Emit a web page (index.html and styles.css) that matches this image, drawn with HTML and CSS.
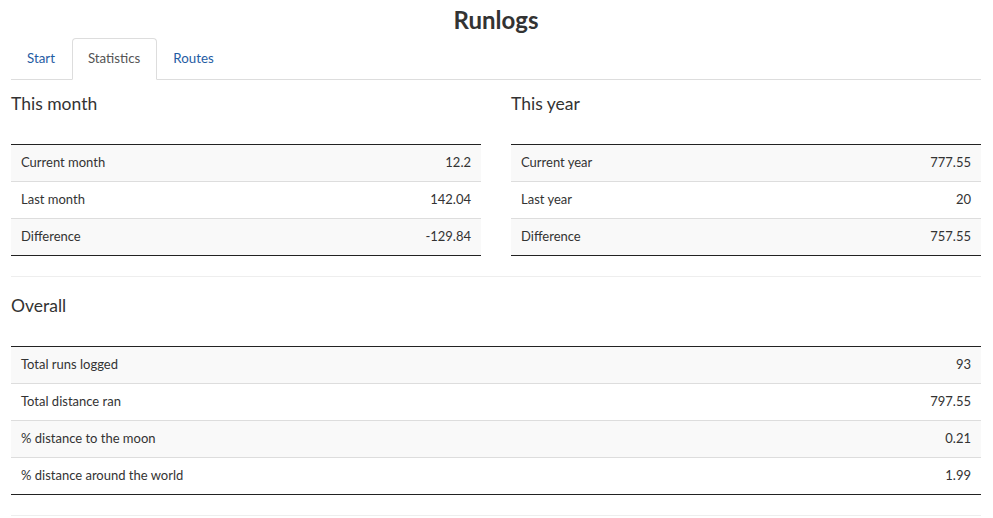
FILE: index.html
```html
<!DOCTYPE html>
<html lang="en">
<head>
    <meta charset="UTF-8">
    <title>Runlogs</title>
    <link rel="stylesheet" href="styles.css">
</head>
<body>
<div class="container">
    <h1 class="title">Runlogs</h1>
    <div class="nav-tabs">
        <a class="tab">Start</a>
        <a class="tab active">Statistics</a>
        <a class="tab">Routes</a>
    </div>
    <div class="tab-content">
        <div class="row">
            <div class="col">
                <h3>This month</h3>
                <table class="stats">
                    <tr><td>Current month</td><td class="num">12.2</td></tr>
                    <tr><td>Last month</td><td class="num">142.04</td></tr>
                    <tr><td>Difference</td><td class="num">-129.84</td></tr>
                </table>
            </div>
            <div class="col">
                <h3>This year</h3>
                <table class="stats">
                    <tr><td>Current year</td><td class="num">777.55</td></tr>
                    <tr><td>Last year</td><td class="num">20</td></tr>
                    <tr><td>Difference</td><td class="num">757.55</td></tr>
                </table>
            </div>
        </div>
        <hr>
        <h3 class="overall">Overall</h3>
        <table class="stats">
            <tr><td>Total runs logged</td><td class="num">93</td></tr>
            <tr><td>Total distance ran</td><td class="num">797.55</td></tr>
            <tr><td>% distance to the moon</td><td class="num">0.21</td></tr>
            <tr><td>% distance around the world</td><td class="num">1.99</td></tr>
        </table>
        <hr>
    </div>
</div>
</body>
</html>
```

FILE: styles.css
```css
body {
    margin: 0;
    font-family: Lato, "Liberation Sans", sans-serif;
    font-size: 14px;
    color: #333;
    background: #fff;
}
.container {
    padding: 0 12px 0 11px;
}
.title {
    margin: 0;
    height: 38px;
    line-height: 40px;
    text-align: center;
    font-size: 24px;
    font-weight: 700;
    color: #333;
}
.nav-tabs {
    display: flex;
    border-bottom: 1px solid #ddd;
}
.tab {
    height: 40px;
    line-height: 38px;
    padding: 0 16px 0 15px;
    margin-bottom: -1px;
    border: 1px solid transparent;
    border-radius: 4px 4px 0 0;
    font-size: 13.3px;
    color: #1f5ca3;
    cursor: pointer;
}
.tab.active {
    color: #555;
    border-color: #ddd;
    border-bottom-color: #fff;
    background: #fff;
}
.row {
    display: grid;
    grid-template-columns: 1fr 1fr;
    gap: 30px;
}
h3 {
    margin: 13px 0 29px;
    font-size: 17.5px;
    font-weight: 400;
    line-height: 22px;
}
h3.overall {
    margin-top: 18px;
}
.stats {
    width: 100%;
    border-collapse: collapse;
    border-top: 1px solid #222;
    border-bottom: 1px solid #222;
}
.stats td {
    height: 34px;
    padding: 0 10px 2px;
    border-top: 1px solid #ddd;
    font-size: 13px;
}
.stats tr:first-child td {
    border-top: none;
}
.stats tr:nth-child(odd) {
    background: #f9f9f9;
}
.stats .num {
    text-align: right;
}
hr {
    margin: 20px 0 0;
    border: 0;
    border-top: 1px solid #eee;
}
```
